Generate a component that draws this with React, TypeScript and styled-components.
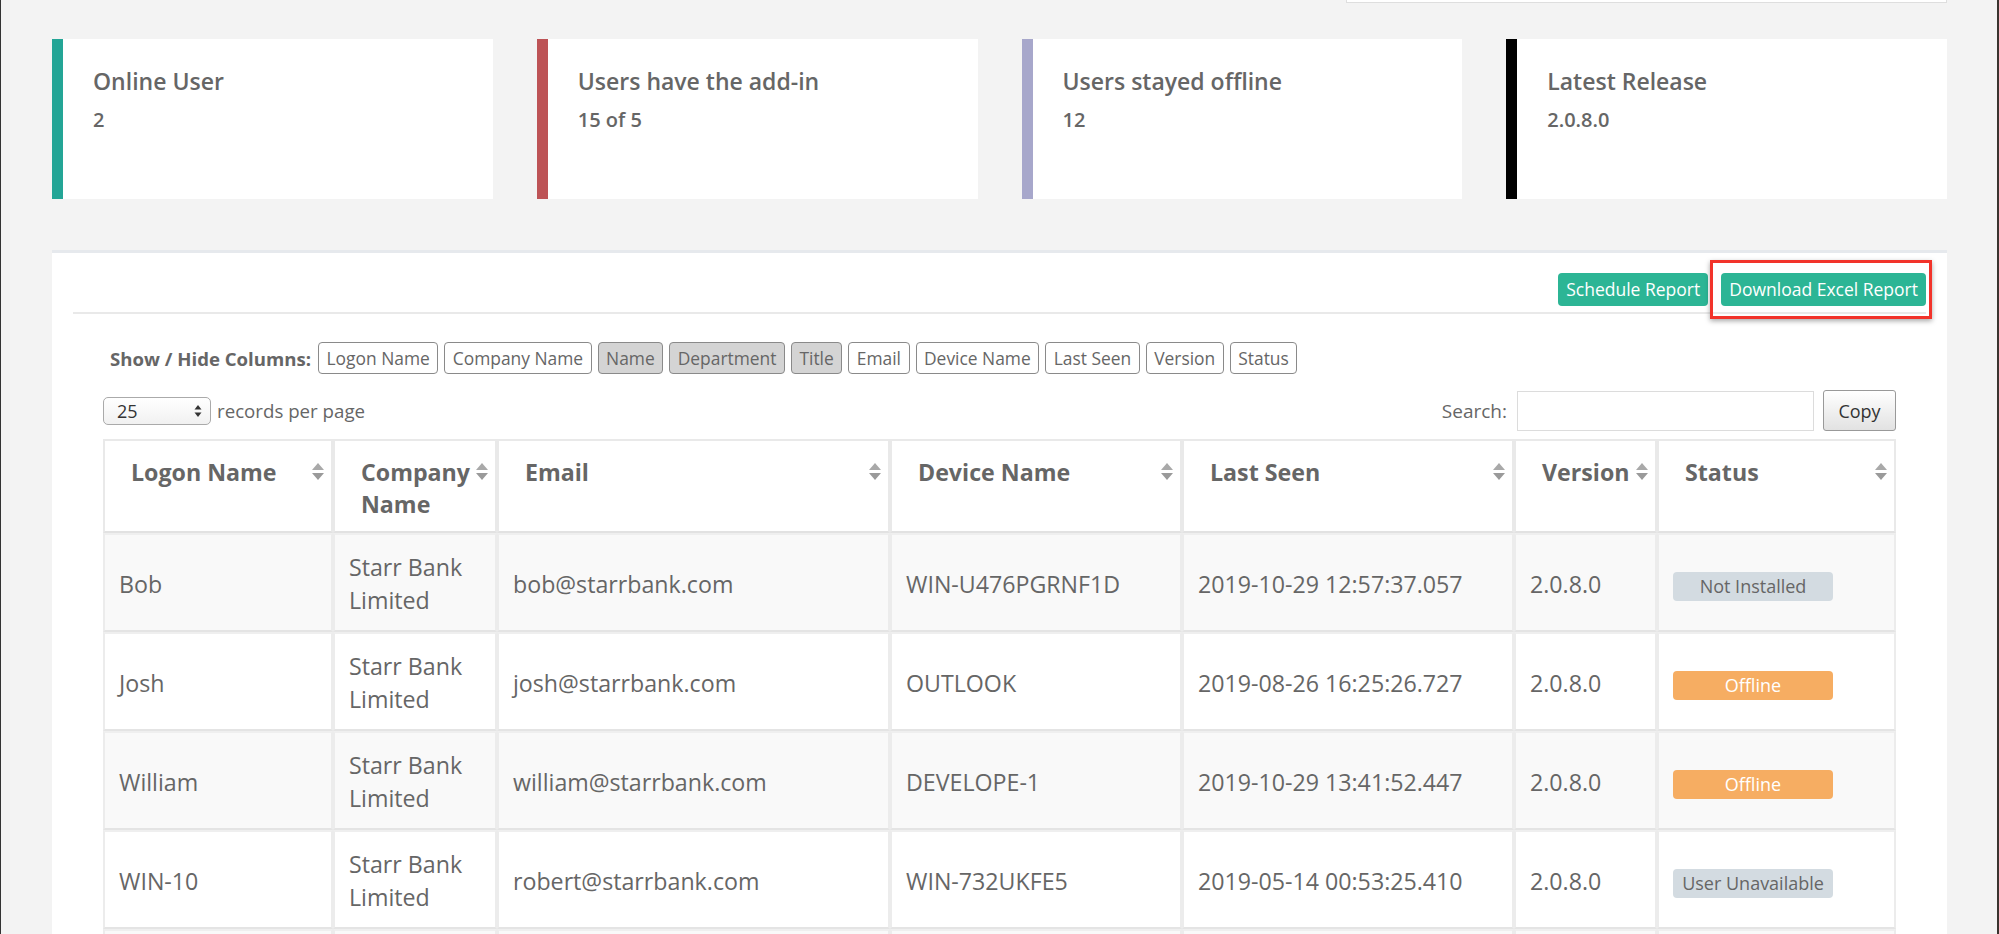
import React from "react";
import styled, { createGlobalStyle } from "styled-components";

const GlobalStyle = createGlobalStyle`
  html, body { margin: 0; padding: 0; background: #f3f3f3; }
  body { font-family: "Open Sans", "Liberation Sans", sans-serif; color: #666; }
  * { box-sizing: border-box; }
`;

const Frame = styled.div`
  width: 1999px;
  height: 934px;
  overflow: hidden;
  border-left: 1px solid #333;
  border-right: 2px solid #3a332e;
  padding: 0 50px 0 51px;
  background: #f3f3f3;
  display: flex;
  flex-direction: column;
`;

const TopRow = styled.div`
  display: flex;
  justify-content: flex-end;
`;

const TopStub = styled.div`
  width: 601px;
  height: 3px;
  background: #fff;
  border: 1px solid #dedede;
  border-top: none;
`;

const Cards = styled.div`
  margin-top: 36px;
  display: grid;
  grid-template-columns: repeat(4, 1fr);
  gap: 44px;
`;

const Card = styled.div<{ $accent: string }>`
  height: 160px;
  background: #fff;
  border-left: 11px solid ${(p) => p.$accent};
  padding: 26px 30px;
`;

const CardTitle = styled.div`
  font-size: 23px;
  font-weight: 600;
  line-height: 32px;
  color: #666;
`;

const CardValue = styled.div`
  margin-top: 9px;
  font-size: 20px;
  font-weight: 600;
  line-height: 28px;
  color: #666;
`;

const Panel = styled.div`
  margin-top: 51px;
  flex: 1;
  background: #fff;
  border-top: 3px solid #e6e9ed;
`;

const PanelHeader = styled.div`
  margin: 0 21px;
  padding: 20px 0 6px;
  border-bottom: 2px solid #e9e9e9;
  display: flex;
  justify-content: flex-end;
  gap: 13px;
`;

const ActionButton = styled.button`
  height: 33px;
  padding: 0 8px;
  border: none;
  border-radius: 4px;
  background: #2cb595;
  color: #fff;
  font-family: "Open Sans", "Liberation Sans", sans-serif;
  font-size: 17.5px;
  line-height: 33px;
  white-space: nowrap;
  cursor: pointer;
`;

const Highlight = styled.div`
  position: relative;
  display: flex;
`;

const HighlightFrame = styled.div`
  position: absolute;
  left: -11px;
  right: -6px;
  top: -13px;
  bottom: -13px;
  border: 3px solid #f2332a;
  box-shadow: 0 2px 5px rgba(0, 0, 0, 0.35);
  pointer-events: none;
`;

const PanelBody = styled.div`
  padding: 0 51px;
`;

const ToggleRow = styled.div`
  margin-top: 28px;
  padding-left: 7px;
  display: flex;
  align-items: center;
  gap: 6px;
`;

const ToggleLabel = styled.span`
  font-size: 18.6px;
  font-weight: 700;
  color: #666;
  margin-right: 1px;
  white-space: nowrap;
`;

const ToggleButton = styled.button<{ $off?: boolean }>`
  height: 32px;
  padding: 0 7.5px;
  border: 1px solid #8a8a8a;
  border-radius: 4px;
  background: ${(p) => (p.$off ? "#d4d4d4" : "#fff")};
  color: #666;
  font-family: "Open Sans", "Liberation Sans", sans-serif;
  font-size: 17.4px;
  white-space: nowrap;
`;

const ControlsRow = styled.div`
  margin-top: 16px;
  display: flex;
  align-items: center;
  justify-content: space-between;
  height: 41px;
`;

const LengthControl = styled.div`
  display: flex;
  align-items: center;
  gap: 6px;
  font-size: 18.7px;
  color: #666;
`;

const FakeSelect = styled.div`
  width: 108px;
  height: 28px;
  border: 1px solid #aaa;
  border-radius: 5px;
  background: linear-gradient(#ffffff, #f1f1f1);
  display: flex;
  align-items: center;
  justify-content: space-between;
  padding: 0 8px 0 13px;
  font-size: 18px;
  color: #333;
`;

const SearchControl = styled.div`
  display: flex;
  align-items: center;
`;

const SearchLabel = styled.label`
  font-size: 19px;
  color: #666;
  margin-right: 10px;
`;

const SearchInput = styled.input`
  width: 297px;
  height: 40px;
  border: 1px solid #dcdcdc;
  outline: none;
  margin-right: 9px;
`;

const CopyButton = styled.button`
  width: 73px;
  height: 41px;
  border: 1px solid #999;
  border-radius: 3px;
  background: linear-gradient(#ffffff, #e2e2e2);
  font-family: "Open Sans", "Liberation Sans", sans-serif;
  font-size: 18px;
  color: #333;
`;

const Table = styled.table`
  margin-top: 8px;
  width: 1793px;
  table-layout: fixed;
  border-collapse: separate;
  border-spacing: 0;
`;

const HeadCell = styled.th`
  text-align: left;
  vertical-align: top;
  padding: 15px 6px 11px 26px;
  font-size: 23.2px;
  font-weight: 700;
  line-height: 32px;
  color: #666;
  background: #fff;
  border: 2px solid #e9e9e9;
  border-bottom-color: #e2e2e2;
`;

const HeadInner = styled.div`
  display: flex;
  align-items: flex-start;
  justify-content: space-between;
  gap: 2px;
`;

const SortIcon = styled.svg`
  flex: none;
  margin-top: 6px;
`;

const Row = styled.tr<{ $striped: boolean }>`
  background: ${(p) => (p.$striped ? "#f9f9f9" : "#fff")};
`;

const Cell = styled.td`
  height: 99px;
  padding: 16px 14px 13px 14px;
  font-size: 23.2px;
  line-height: 33px;
  color: #666;
  vertical-align: middle;
  border: 2px solid #ececec;
  border-top-color: #efefef;
  border-bottom-color: #e4e4e4;
  overflow: hidden;
`;

const Badge = styled.span<{ $tone: "muted" | "warn" }>`
  display: inline-block;
  width: 160px;
  height: 29px;
  line-height: 29px;
  border-radius: 4px;
  text-align: center;
  font-size: 18px;
  white-space: nowrap;
  background: ${(p) => (p.$tone === "warn" ? "#f6ad62" : "#d3dbe1")};
  color: ${(p) => (p.$tone === "warn" ? "#fff" : "#666")};
`;

const Sort = () => (
  <SortIcon width="14" height="20" viewBox="0 0 14 20">
    <polygon points="7,1 13,8 1,8" fill="#a9a9a9" />
    <polygon points="1,11 13,11 7,18" fill="#9a9a9a" />
  </SortIcon>
);

const cards = [
  { title: "Online User", value: "2", accent: "#23a596" },
  { title: "Users have the add-in", value: "15 of 5", accent: "#bd5356" },
  { title: "Users stayed offline", value: "12", accent: "#a7a7cb" },
  { title: "Latest Release", value: "2.0.8.0", accent: "#000" },
];

const toggles = [
  { label: "Logon Name" },
  { label: "Company Name" },
  { label: "Name", off: true },
  { label: "Department", off: true },
  { label: "Title", off: true },
  { label: "Email" },
  { label: "Device Name" },
  { label: "Last Seen" },
  { label: "Version" },
  { label: "Status" },
];

const columns = [
  { label: "Logon Name", width: 230 },
  { label: "Company Name", width: 164 },
  { label: "Email", width: 393 },
  { label: "Device Name", width: 292 },
  { label: "Last Seen", width: 332 },
  { label: "Version", width: 143 },
  { label: "Status", width: 239 },
];

type Status = { text: string; tone: "muted" | "warn" };

const rows: {
  logon: string;
  email: string;
  device: string;
  seen: string;
  status: Status;
}[] = [
  { logon: "Bob", email: "bob@starrbank.com", device: "WIN-U476PGRNF1D", seen: "2019-10-29 12:57:37.057", status: { text: "Not Installed", tone: "muted" } },
  { logon: "Josh", email: "josh@starrbank.com", device: "OUTLOOK", seen: "2019-08-26 16:25:26.727", status: { text: "Offline", tone: "warn" } },
  { logon: "William", email: "william@starrbank.com", device: "DEVELOPE-1", seen: "2019-10-29 13:41:52.447", status: { text: "Offline", tone: "warn" } },
  { logon: "WIN-10", email: "robert@starrbank.com", device: "WIN-732UKFE5", seen: "2019-05-14 00:53:25.410", status: { text: "User Unavailable", tone: "muted" } },
];

export default function App() {
  return (
    <>
      <GlobalStyle />
      <Frame>
        <TopRow>
          <TopStub />
        </TopRow>
        <Cards>
          {cards.map((c) => (
            <Card key={c.title} $accent={c.accent}>
              <CardTitle>{c.title}</CardTitle>
              <CardValue>{c.value}</CardValue>
            </Card>
          ))}
        </Cards>
        <Panel>
          <PanelHeader>
            <ActionButton>Schedule Report</ActionButton>
            <Highlight>
              <ActionButton>Download Excel Report</ActionButton>
              <HighlightFrame />
            </Highlight>
          </PanelHeader>
          <PanelBody>
            <ToggleRow>
              <ToggleLabel>Show / Hide Columns:</ToggleLabel>
              {toggles.map((t) => (
                <ToggleButton key={t.label} $off={t.off}>
                  {t.label}
                </ToggleButton>
              ))}
            </ToggleRow>
            <ControlsRow>
              <LengthControl>
                <FakeSelect>
                  <span>25</span>
                  <svg width="8" height="14" viewBox="0 0 8 14">
                    <polygon points="4,1 7.5,5.5 0.5,5.5" fill="#333" />
                    <polygon points="0.5,8.5 7.5,8.5 4,13" fill="#333" />
                  </svg>
                </FakeSelect>
                <span>records per page</span>
              </LengthControl>
              <SearchControl>
                <SearchLabel>Search:</SearchLabel>
                <SearchInput type="text" />
                <CopyButton>Copy</CopyButton>
              </SearchControl>
            </ControlsRow>
            <Table>
              <colgroup>
                {columns.map((c) => (
                  <col key={c.label} style={{ width: c.width }} />
                ))}
              </colgroup>
              <thead>
                <tr>
                  {columns.map((c) => (
                    <HeadCell key={c.label}>
                      <HeadInner>
                        <span>{c.label}</span>
                        <Sort />
                      </HeadInner>
                    </HeadCell>
                  ))}
                </tr>
              </thead>
              <tbody>
                {rows.map((r, i) => (
                  <Row key={r.logon} $striped={i % 2 === 0}>
                    <Cell>{r.logon}</Cell>
                    <Cell>Starr Bank Limited</Cell>
                    <Cell>{r.email}</Cell>
                    <Cell>{r.device}</Cell>
                    <Cell>{r.seen}</Cell>
                    <Cell>2.0.8.0</Cell>
                    <Cell>
                      <Badge $tone={r.status.tone}>{r.status.text}</Badge>
                    </Cell>
                  </Row>
                ))}
                <Row $striped>
                  {columns.map((c) => (
                    <Cell key={c.label} />
                  ))}
                </Row>
              </tbody>
            </Table>
          </PanelBody>
        </Panel>
      </Frame>
    </>
  );
}
